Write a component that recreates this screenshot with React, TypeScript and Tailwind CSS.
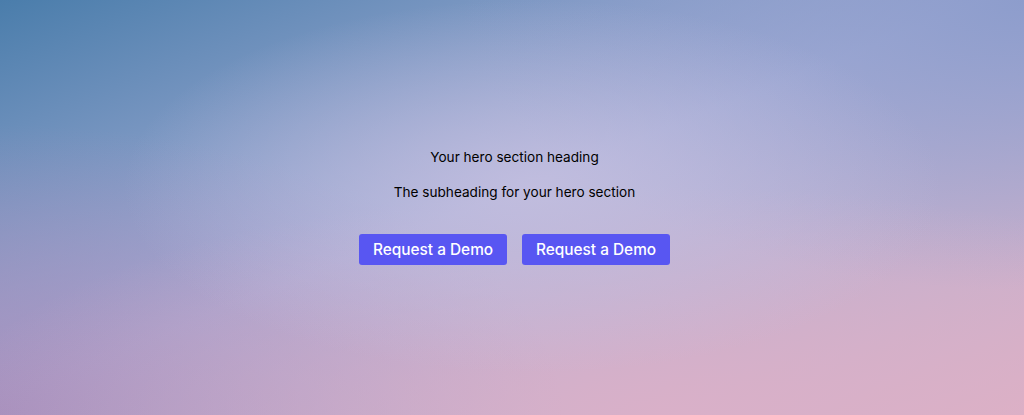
export default function App() {
  return (
    <div className="h-[415px] w-full overflow-hidden bg-[radial-gradient(ellipse_40%_45%_at_52%_45%,rgba(198,192,224,0.8),rgba(198,192,224,0)),radial-gradient(ellipse_70%_55%_at_65%_100%,rgba(220,176,200,0.85),rgba(220,176,200,0)),radial-gradient(ellipse_55%_70%_at_0%_100%,rgba(166,140,186,0.9),rgba(166,140,186,0)),radial-gradient(ellipse_55%_70%_at_100%_0%,rgba(138,155,203,0.9),rgba(138,155,203,0)),linear-gradient(to_bottom_right,#4a7dab,#aab0d8_48%,#dcb0c4)] font-['Inter',sans-serif] text-black">
      <div className="flex flex-col items-center pl-[5px] pt-[147px]">
        <h1 className="text-[13.6px] leading-[20px]">Your hero section heading</h1>
        <p className="mt-[15px] text-[13.6px] leading-[20px]">The subheading for your hero section</p>
        <div className="mt-[32px] flex gap-[15px]">
          <button className="h-[31px] w-[148px] rounded-[3px] bg-[#5856f2] text-[15.4px] font-medium text-white">Request a Demo</button>
          <button className="h-[31px] w-[148px] rounded-[3px] bg-[#5856f2] text-[15.4px] font-medium text-white">Request a Demo</button>
        </div>
      </div>
    </div>
  );
}
